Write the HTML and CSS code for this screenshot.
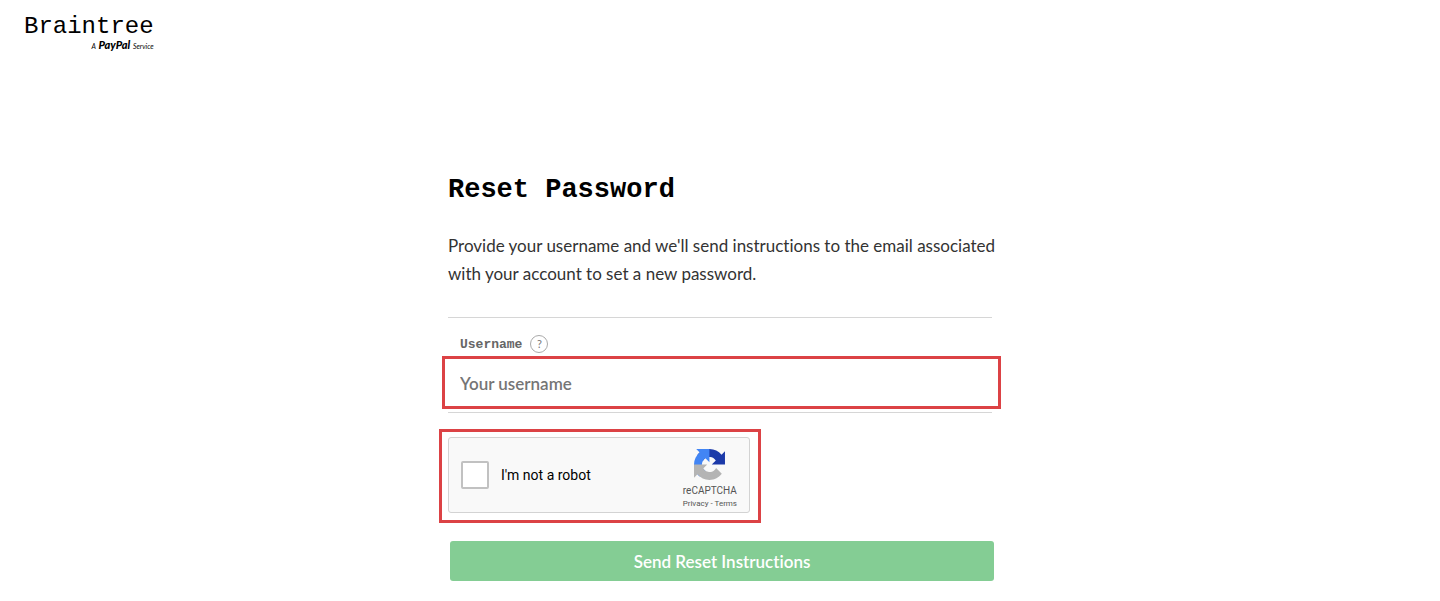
FILE: index.html
```html
<!DOCTYPE html>
<html lang="en">
<head>
    <meta charset="UTF-8">
    <meta name="viewport" content="width=device-width, initial-scale=1.0">
    <title>Reset Password</title>
    <link rel="stylesheet" href="styles.css">
</head>
<body>

    <header>
        <a href="#" class="logo">
            <span class="logo-name">Braintree</span>
            <span class="logo-tag">A <b>PayPal</b> Service</span>
        </a>
    </header>

    <main>
        <h1>Reset Password</h1>
        <p class="intro">Provide your username and we'll send instructions to the email associated with your account to set a new password.</p>

        <form>
            <div class="field">
                <div class="field-label">
                    <label for="username">Username</label>
                    <button type="button" class="help">?</button>
                </div>
                <input type="text" id="username" placeholder="Your username">
            </div>

            <div class="captcha-frame">
                <div class="captcha">
                    <input type="checkbox" id="robot">
                    <label for="robot">I'm not a robot</label>
                    <div class="captcha-brand">
                        <svg width="31" height="31" viewBox="0 0 64 64" aria-hidden="true">
                            <path fill="#1c3aa9" d="M64 31.955l-.033-1.37V4.687l-7.16 7.16C50.948 4.674 42.033.093 32.05.093c-10.389 0-19.622 4.96-25.458 12.64l11.736 11.86a15.55 15.55 0 0 1 4.754-5.334c2.05-1.6 4.952-2.906 8.968-2.906.485 0 .86.057 1.135.163 4.976.393 9.288 3.14 11.828 7.124l-8.307 8.307L64 31.953"/>
                            <path fill="#4285f4" d="M31.862.094l-1.37.033H4.594l7.16 7.16C4.58 13.147 0 22.06 0 32.046c0 10.389 4.96 19.622 12.64 25.458L24.5 45.768a15.55 15.55 0 0 1-5.334-4.754c-1.6-2.05-2.906-4.952-2.906-8.968 0-.485.057-.86.163-1.135.393-4.976 3.14-9.288 7.124-11.828l8.307 8.307L31.86.095"/>
                            <path fill="#b4b4b4" d="M.001 32.045l.033 1.37v25.898l7.16-7.16c5.86 7.173 14.774 11.754 24.76 11.754 10.389 0 19.622-4.96 25.458-12.64l-11.736-11.86a15.55 15.55 0 0 1-4.754 5.334c-2.05 1.6-4.952 2.906-8.968 2.906-.485 0-.86-.057-1.135-.163-4.976-.393-9.288-3.14-11.828-7.124l8.307-8.307c-10.522.04-22.4.066-27.295-.005"/>
                        </svg>
                        <span class="captcha-name">reCAPTCHA</span>
                        <span class="captcha-links"><a href="#">Privacy</a> - <a href="#">Terms</a></span>
                    </div>
                </div>
            </div>

            <button type="submit" class="submit">Send Reset Instructions</button>
        </form>
    </main>

</body>
</html>
```

FILE: styles.css
```css
* {
    box-sizing: border-box;
}

body {
    margin: 0;
    background-color: #fff;
    color: #333;
    font-family: Lato, sans-serif;
    font-size: 16px;
    font-variant-ligatures: none;
}

a {
    color: inherit;
    text-decoration: none;
}

header {
    display: flex;
    padding: 14px 24px 10px;
}

.logo {
    display: flex;
    flex-direction: column;
    align-items: flex-end;
    color: #000;
}

.logo-name {
    font-family: "Liberation Mono", monospace;
    font-size: 24px;
    line-height: 25px;
}

.logo-tag {
    font-size: 7px;
    font-style: italic;
    line-height: 11px;
}

.logo-tag b {
    margin: 0 1px;
    font-size: 11px;
    font-weight: 900;
}

main {
    max-width: 576px;
    margin: 0 auto;
    padding: 112px 16px 20px;
}

h1 {
    margin: 0 0 26px;
    color: #000;
    font-family: "Liberation Mono", monospace;
    font-size: 27px;
    line-height: 32px;
}

.intro {
    margin: 0 -8px 29px 0;
    font-size: 17px;
    line-height: 28px;
}

.field {
    padding-top: 16px;
    border-top: 1px solid #d6d6d6;
    border-bottom: 1px solid #d6d6d6;
}

.field-label {
    display: flex;
    align-items: center;
    gap: 8px;
    height: 20px;
    margin: 0 12px 2px;
    color: #666;
    font-family: "Liberation Mono", monospace;
    font-size: 13px;
    font-weight: bold;
}

.help {
    width: 18px;
    height: 18px;
    padding: 0;
    border: 1px solid #aaa;
    border-radius: 50%;
    background-color: #fff;
    color: #777;
    font-family: Lato, sans-serif;
    font-size: 11px;
    line-height: 16px;
}

.field input {
    display: block;
    width: calc(100% + 15px);
    height: 53px;
    margin: 0 -9px 3px -6px;
    padding: 3px 15px 1px;
    border: 3px solid #dc4245;
    background-color: #fff;
    color: #333;
    font-family: Lato, sans-serif;
    font-size: 17px;
}

.field input::placeholder {
    color: #757575;
    font-weight: 600;
}

.captcha-frame {
    width: 322px;
    margin: 16px 0 18px -9px;
    padding: 5px 8px 7px 6px;
    border: 3px solid #dc4245;
}

.captcha {
    display: flex;
    align-items: center;
    height: 76px;
    padding: 0 12px;
    border: 1px solid #d3d3d3;
    border-radius: 3px;
    background-color: #f9f9f9;
    color: #000;
    font-family: Roboto, sans-serif;
    font-size: 14px;
}

.captcha input {
    appearance: none;
    width: 28px;
    height: 28px;
    margin: 0 12px 0 0;
    border: 2px solid #c1c1c1;
    border-radius: 2px;
    background-color: #fff;
}

.captcha input:checked {
    background-color: #4285f4;
}

.captcha-brand {
    display: flex;
    flex-direction: column;
    align-items: center;
    margin-left: auto;
    padding-top: 8px;
    color: #555;
}

.captcha-name {
    margin-top: 4px;
    font-size: 10px;
    line-height: 14px;
}

.captcha-links {
    font-size: 8px;
    line-height: 12px;
}

.submit {
    display: block;
    width: 100%;
    height: 40px;
    margin-left: 2px;
    padding: 1px 0 0;
    border: none;
    border-radius: 3px;
    background-color: #84cd94;
    color: #fff;
    font-family: Lato, sans-serif;
    font-size: 17px;
    font-weight: 600;
    font-variant-ligatures: none;
    cursor: pointer;
}
```
